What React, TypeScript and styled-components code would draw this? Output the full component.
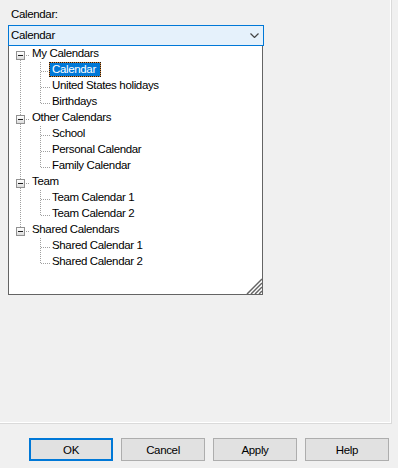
import React from 'react';
import styled, { createGlobalStyle, css } from 'styled-components';

const Global = createGlobalStyle`
  html, body { margin: 0; padding: 0; background: #f0f0f0; }
  body {
    font-family: "Liberation Sans", Arial, sans-serif;
    font-size: 11.5px;
    letter-spacing: -0.35px;
    color: #000;
  }
`;

const Window = styled.div`
  width: 398px;
  height: 468px;
  overflow: hidden;
  background: #f0f0f0;
  display: flex;
  flex-direction: column;
`;

const Pane = styled.div`
  width: 392px;
  height: 424px;
  flex: none;
  box-sizing: border-box;
  border-right: 1px solid #dadada;
  border-bottom: 1px solid #dadada;
  box-shadow: inset -1px -1px 0 #ffffff;
  padding: 6px 0 0 8px;
`;

const FieldLabel = styled.div`
  height: 15px;
  line-height: 16px;
  margin: 0 0 4px 3px;
`;

const Combo = styled.div`
  width: 256px;
  height: 21px;
  box-sizing: border-box;
  border: 1px solid #0078d7;
  background: #e5f1fb;
  display: flex;
  align-items: center;
  justify-content: space-between;
  padding: 0 4px 0 2px;
`;

const ComboText = styled.span`
  line-height: 19px;
`;

const ListBox = styled.div`
  width: 255px;
  height: 249px;
  box-sizing: border-box;
  border: 1px solid #646464;
  border-top: none;
  background: #ffffff;
  display: flex;
  flex-direction: column;
  padding-left: 1px;
`;

const Tree = styled.div`
  display: flex;
  flex-direction: column;
`;

const Row = styled.div`
  display: flex;
  align-items: flex-start;
  height: 16px;
`;

const dotColor = '#a0a0a0';
const vLine = (from: number, to: number) =>
  `repeating-linear-gradient(to bottom, ${dotColor} 0 1px, transparent 1px 2px) 10px ${from}px / 1px ${to - from}px no-repeat`;
const hLine = (from: number, to: number) =>
  `repeating-linear-gradient(to right, ${dotColor} 0 1px, transparent 1px 2px) ${from}px 9px / ${to - from}px 1px no-repeat`;

type GutterKind = 'blank' | 'pipe' | 'tee' | 'elbow';

const Gutter = styled.div<{ $kind: GutterKind }>`
  width: 20px;
  height: 16px;
  flex: none;
  ${({ $kind }) =>
    $kind === 'pipe'
      ? css`background: ${vLine(0, 16)};`
      : $kind === 'tee'
      ? css`background: ${vLine(0, 16)}, ${hLine(11, 20)};`
      : $kind === 'elbow'
      ? css`background: ${vLine(0, 10)}, ${hLine(11, 20)};`
      : ''}
`;

const ExpanderCell = styled.div<{ $above: boolean; $below: boolean }>`
  width: 20px;
  height: 16px;
  flex: none;
  box-sizing: border-box;
  padding: 5px 0 0 6px;
  background: ${({ $above, $below }) =>
    [$above ? vLine(0, 5) : '', $below ? vLine(14, 16) : '', hLine(16, 20)]
      .filter(Boolean)
      .join(', ')};
`;

const ExpanderBox = styled.div`
  width: 9px;
  height: 9px;
  box-sizing: border-box;
  border: 1px solid #919191;
  background: linear-gradient(#ffffff, #dcdcdc);
  display: flex;
  align-items: center;
  justify-content: center;
`;

const Minus = styled.span`
  width: 5px;
  height: 1px;
  background: #1e1e1e;
`;

const ItemLabel = styled.span<{ $selected?: boolean }>`
  height: 15px;
  box-sizing: border-box;
  border: 1px solid transparent;
  line-height: 13px;
  padding: 0 4px 0 2px;
  margin-left: -1px;
  white-space: nowrap;
  ${({ $selected }) =>
    $selected &&
    css`
      color: #ffffff;
      border: 1px dotted #1a1a1a;
      background: linear-gradient(#0078d7, #0078d7) padding-box,
        linear-gradient(#d98a3c, #d98a3c) border-box;
    `}
`;

const Grip = styled.svg`
  margin-top: auto;
  align-self: flex-end;
  display: block;
  flex: none;
`;

const ButtonRow = styled.div`
  display: flex;
  gap: 8px;
  padding: 14px 0 0 29px;
`;

const Button = styled.button<{ $default?: boolean }>`
  width: 84px;
  height: 23px;
  box-sizing: border-box;
  margin: 0;
  padding: 0;
  background: #e1e1e1;
  border: 1px solid #adadad;
  font-family: "Liberation Sans", Arial, sans-serif;
  font-size: 11.5px;
  letter-spacing: -0.35px;
  color: #000;
  ${({ $default }) => $default && css`border: 2px solid #0078d7;`}
`;

type Group = { label: string; children: string[] };

const groups: Group[] = [
  { label: 'My Calendars', children: ['Calendar', 'United States holidays', 'Birthdays'] },
  { label: 'Other Calendars', children: ['School', 'Personal Calendar', 'Family Calendar'] },
  { label: 'Team', children: ['Team Calendar 1', 'Team Calendar 2'] },
  { label: 'Shared Calendars', children: ['Shared Calendar 1', 'Shared Calendar 2'] },
];

const Chevron = () => (
  <svg width="9" height="5" viewBox="0 0 9 5">
    <polyline points="0.5,0.5 4.5,4.5 8.5,0.5" fill="none" stroke="#444" strokeWidth="1.2" />
  </svg>
);

export default function App() {
  return (
    <Window>
      <Global />
      <Pane>
        <FieldLabel>Calendar:</FieldLabel>
        <Combo>
          <ComboText>Calendar</ComboText>
          <Chevron />
        </Combo>
        <ListBox>
          <Tree>
            {groups.map((g, gi) => {
              const lastGroup = gi === groups.length - 1;
              return (
                <React.Fragment key={g.label}>
                  <Row>
                    <ExpanderCell $above={gi > 0} $below={!lastGroup}>
                      <ExpanderBox>
                        <Minus />
                      </ExpanderBox>
                    </ExpanderCell>
                    <ItemLabel>{g.label}</ItemLabel>
                  </Row>
                  {g.children.map((c, ci) => (
                    <Row key={c}>
                      <Gutter $kind={lastGroup ? 'blank' : 'pipe'} />
                      <Gutter $kind={ci === g.children.length - 1 ? 'elbow' : 'tee'} />
                      <ItemLabel $selected={gi === 0 && ci === 0}>{c}</ItemLabel>
                    </Row>
                  ))}
                </React.Fragment>
              );
            })}
          </Tree>
          <Grip width="16" height="16" viewBox="0 0 16 16">
            {[1, 5, 9, 13].map((o) => (
              <line key={o} x1={o} y1="16" x2="16" y2={o} stroke="#646464" strokeWidth="1.5" />
            ))}
          </Grip>
        </ListBox>
      </Pane>
      <ButtonRow>
        <Button $default>OK</Button>
        <Button>Cancel</Button>
        <Button>Apply</Button>
        <Button>Help</Button>
      </ButtonRow>
    </Window>
  );
}
